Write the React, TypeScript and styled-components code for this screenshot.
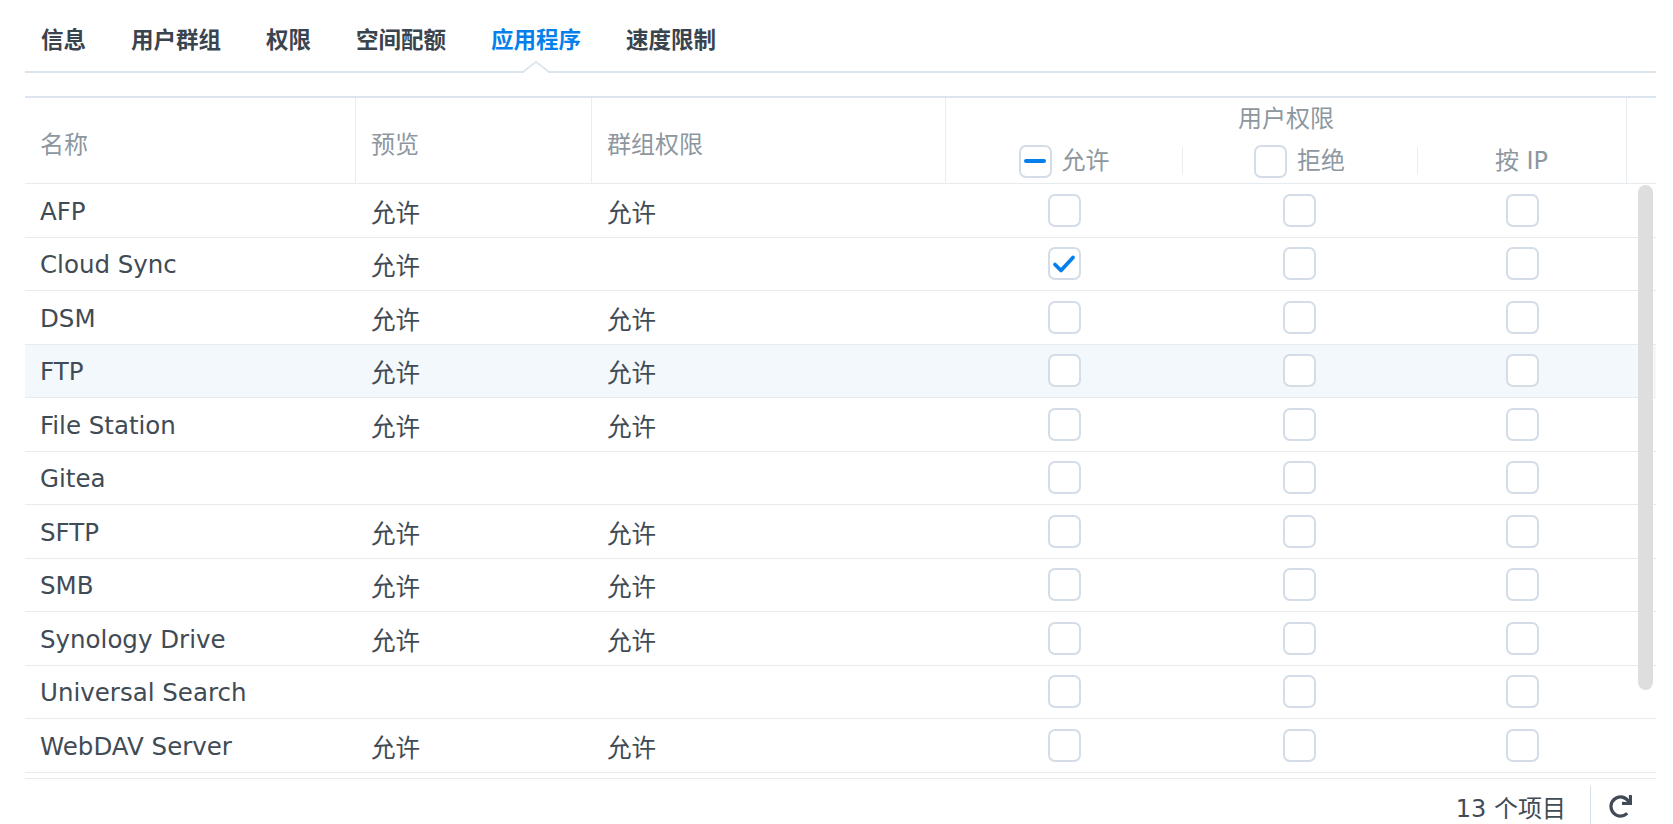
import React from "react";
import styled, { createGlobalStyle } from "styled-components";
import { FaRedo } from "react-icons/fa";

const GlobalStyle = createGlobalStyle`
  html, body { margin: 0; padding: 0; background: #ffffff; }
  body {
    font-family: "DejaVu Sans", "Noto Sans CJK SC", sans-serif;
    color: #414b55;
  }
  * { box-sizing: border-box; }
`;

const BLUE = "#057feb";
const TEXT = "#414b55";
const LINE = "#dce5ed";
const ROWLINE = "#e6ebf0";
const COLS = "331px 236px 354px 236px 235px 210px 1fr";

const Page = styled.div`
  width: 1673px;
  height: 824px;
  overflow: hidden;
  padding: 0 17px 0 25px;
  display: flex;
  flex-direction: column;
`;

const TabBar = styled.div`
  display: flex;
  gap: 45px;
  height: 73px;
  padding: 23px 0 0 16px;
  border-bottom: 2px solid ${LINE};
`;

const Tab = styled.div<{ $active?: boolean }>`
  position: relative;
  height: 48px;
  font-family: "Noto Sans CJK SC", sans-serif;
  font-weight: 700;
  font-size: 22.5px;
  line-height: 30px;
  color: ${(p) => (p.$active ? BLUE : "#3a444e")};
`;

const Caret = styled.svg`
  position: absolute;
  left: 50%;
  bottom: -2px;
  width: 24px;
  height: 12px;
  transform: translateX(-50%);
  overflow: visible;
`;

const Table = styled.div`
  margin-top: 23px;
  display: flex;
  flex-direction: column;
`;

const HeaderRow = styled.div`
  display: grid;
  grid-template-columns: 331px 236px 354px 681px 1fr;
  height: 88px;
  border-top: 2px solid ${LINE};
  border-bottom: 1px solid ${ROWLINE};
`;

const HeadCell = styled.div<{ $last?: boolean }>`
  display: flex;
  align-items: center;
  padding: 4px 0 0 15px;
  font-size: 24px;
  color: #8e979f;
  border-right: ${(p) => (p.$last ? "none" : "1px solid #e8edf1")};
`;

const PermHead = styled.div`
  display: flex;
  flex-direction: column;
  align-items: stretch;
  border-right: 1px solid #e8edf1;
  color: #8e979f;
  font-size: 24px;
`;

const PermTitle = styled.div`
  margin-top: 6px;
  height: 30px;
  line-height: 30px;
  text-align: center;
`;

const SubRow = styled.div`
  margin-top: 10px;
  display: grid;
  grid-template-columns: 236px 235px 1fr;
  height: 34px;
`;

const SubCell = styled.div`
  position: relative;
  display: flex;
  align-items: center;
  justify-content: center;
  gap: 10px;
  line-height: 34px;

  & + &::before {
    content: "";
    position: absolute;
    left: 0;
    top: 3px;
    bottom: 3px;
    width: 1px;
    background: #e8edf1;
  }
`;

const Body = styled.div`
  position: relative;
  height: 595px;
  overflow: hidden;
  border-bottom: 1px solid ${ROWLINE};
`;

const Row = styled.div<{ $hover?: boolean }>`
  display: grid;
  grid-template-columns: ${COLS};
  height: 53.5px;
  border-bottom: 1px solid ${ROWLINE};
  background: ${(p) => (p.$hover ? "#f3f8fc" : "#ffffff")};
`;

const Cell = styled.div`
  display: flex;
  align-items: center;
  padding: 2px 0 0 15px;
  font-size: 24.5px;
  color: ${TEXT};
  white-space: nowrap;
`;

const CheckCell = styled.div`
  display: flex;
  align-items: center;
  justify-content: center;
`;

const Box = styled.span`
  width: 33px;
  height: 33px;
  flex: none;
  border: 2px solid #d4dde7;
  border-radius: 7px;
  background: #ffffff;
  display: inline-flex;
  align-items: center;
  justify-content: center;
`;

const Minus = styled.span`
  width: 22px;
  height: 4px;
  border-radius: 2px;
  background: ${BLUE};
`;

const Thumb = styled.div`
  position: absolute;
  top: 1px;
  right: 3px;
  width: 15px;
  height: 505px;
  border-radius: 8px;
  background: #dedede;
`;

const Footer = styled.div`
  display: flex;
  justify-content: flex-end;
  align-items: center;
  height: 54px;
  padding-right: 24px;
  flex: none;
`;

const Count = styled.span`
  font-size: 24px;
  color: ${TEXT};
`;

const Divider = styled.span`
  width: 1px;
  height: 40px;
  background: #d9e1e8;
  margin: 0 18px 0 24px;
`;

const Refresh = styled.span`
  display: inline-flex;
  color: ${TEXT};
`;

type Item = { name: string; preview: string; group: string; allow?: boolean; hover?: boolean };

const items: Item[] = [
  { name: "AFP", preview: "允许", group: "允许" },
  { name: "Cloud Sync", preview: "允许", group: "", allow: true },
  { name: "DSM", preview: "允许", group: "允许" },
  { name: "FTP", preview: "允许", group: "允许", hover: true },
  { name: "File Station", preview: "允许", group: "允许" },
  { name: "Gitea", preview: "", group: "" },
  { name: "SFTP", preview: "允许", group: "允许" },
  { name: "SMB", preview: "允许", group: "允许" },
  { name: "Synology Drive", preview: "允许", group: "允许" },
  { name: "Universal Search", preview: "", group: "" },
  { name: "WebDAV Server", preview: "允许", group: "允许" },
];

const tabs = ["信息", "用户群组", "权限", "空间配额", "应用程序", "速度限制"];

const CheckMark = () => (
  <svg width="28" height="28" viewBox="0 0 28 28">
    <path
      d="M5 14.5 L11 20.5 L23 7.5"
      fill="none"
      stroke={BLUE}
      strokeWidth="3.8"
      strokeLinecap="round"
      strokeLinejoin="round"
    />
  </svg>
);

const CheckBox = ({ checked }: { checked?: boolean }) => <Box>{checked ? <CheckMark /> : null}</Box>;

export default function App() {
  return (
    <>
      <GlobalStyle />
      <Page>
        <TabBar>
          {tabs.map((t) => (
            <Tab key={t} $active={t === "应用程序"}>
              {t}
              {t === "应用程序" && (
                <Caret viewBox="0 0 24 12">
                  <polygon points="0,12 0,10 12,0.8 24,10 24,12" fill="#ffffff" />
                  <polyline points="-1,11 12,0.8 25,11" fill="none" stroke={LINE} strokeWidth="1.6" />
                </Caret>
              )}
            </Tab>
          ))}
        </TabBar>
        <Table>
          <HeaderRow>
            <HeadCell>名称</HeadCell>
            <HeadCell>预览</HeadCell>
            <HeadCell>群组权限</HeadCell>
            <PermHead>
              <PermTitle>用户权限</PermTitle>
              <SubRow>
                <SubCell>
                  <Box>
                    <Minus />
                  </Box>
                  允许
                </SubCell>
                <SubCell>
                  <Box />
                  拒绝
                </SubCell>
                <SubCell>按 IP</SubCell>
              </SubRow>
            </PermHead>
            <HeadCell $last />
          </HeaderRow>
          <Body>
            {items.map((it) => (
              <Row key={it.name} $hover={it.hover}>
                <Cell>{it.name}</Cell>
                <Cell>{it.preview}</Cell>
                <Cell>{it.group}</Cell>
                <CheckCell>
                  <CheckBox checked={it.allow} />
                </CheckCell>
                <CheckCell>
                  <CheckBox />
                </CheckCell>
                <CheckCell>
                  <CheckBox />
                </CheckCell>
                <div />
              </Row>
            ))}
            <Thumb />
          </Body>
          <Footer>
            <Count>13 个项目</Count>
            <Divider />
            <Refresh>
              <FaRedo size={23} />
            </Refresh>
          </Footer>
        </Table>
      </Page>
    </>
  );
}
